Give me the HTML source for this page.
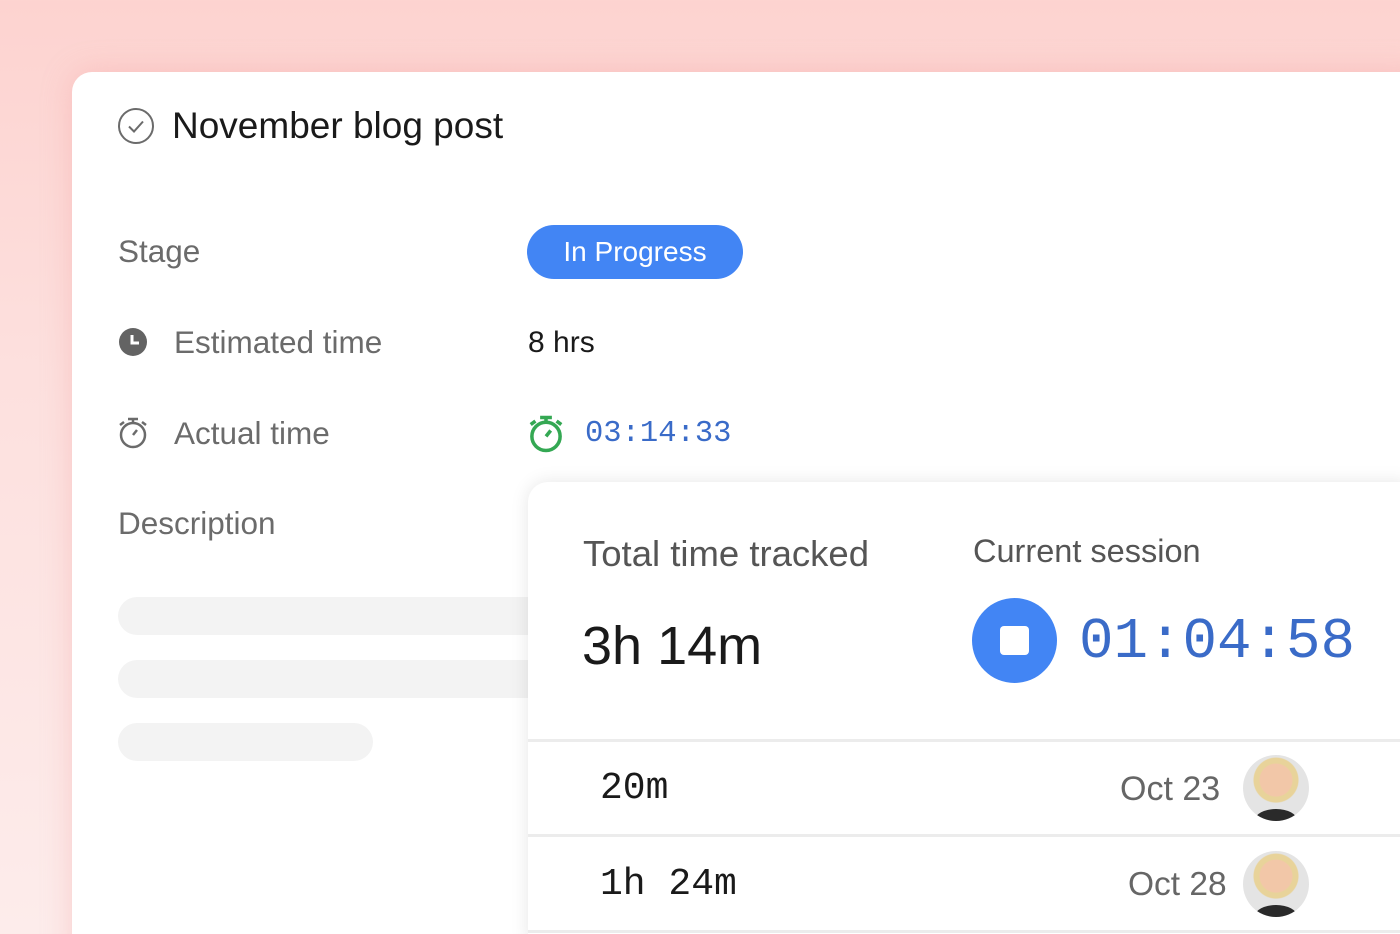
<!DOCTYPE html>
<html><head><style>
*{margin:0;padding:0;box-sizing:border-box}
html,body{width:1400px;height:934px;overflow:hidden}
body{position:relative;font-family:"Liberation Sans",sans-serif;background:linear-gradient(180deg,#fdd3d0 0%,#fde0de 40%,#fdeceb 100%)}
.card{position:absolute;left:72px;top:72px;width:1360px;height:900px;background:#fff;border-radius:20px;box-shadow:0 0 30px rgba(240,150,150,.35)}
.t{position:absolute;white-space:nowrap}
.lab{color:#6b6b6b;font-size:31.5px}
.mono{font-family:"Liberation Mono",monospace}
.bar{position:absolute;left:118px;height:38px;background:#f3f3f3;border-radius:19px}
.pop{position:absolute;left:528px;top:482px;width:880px;height:460px;background:#fff;border-radius:20px 0 0 0;box-shadow:0 0 18px rgba(0,0,0,.1)}
.div{position:absolute;left:528px;width:872px;height:3px;background:#ececec}
.av{position:absolute;width:66px;height:66px;border-radius:50%;background:radial-gradient(circle at 50% 38%,#f2c7a8 0 16px,#e8d39a 17px 22px,#e4e4e4 23px);overflow:hidden}
.av:after{content:"";position:absolute;left:12px;bottom:-10px;width:42px;height:22px;border-radius:50%;background:#2a2a2a}
</style></head><body>
<div class="card"></div>
<svg class="t" style="left:117px;top:107px" width="38" height="38" viewBox="0 0 38 38"><circle cx="19" cy="19" r="17" fill="none" stroke="#6b6b6b" stroke-width="2"/><path d="M12 19.5l5 5 9-10" fill="none" stroke="#6b6b6b" stroke-width="2"/></svg>
<div class="t" style="left:172px;top:105px;font-size:37px;color:#1a1a1a">November blog post</div>
<div class="t lab" style="left:118px;top:233px">Stage</div>
<div class="t" style="left:527px;top:225px;width:216px;height:54px;border-radius:27px;background:#4285f4;color:#fff;font-size:28px;line-height:54px;text-align:center">In Progress</div>
<svg class="t" style="left:118px;top:327px" width="30" height="30" viewBox="0 0 30 30"><circle cx="15" cy="15" r="14" fill="#636363"/><path d="M14 8v8h7" fill="none" stroke="#fff" stroke-width="3"/></svg>
<div class="t lab" style="left:174px;top:324px">Estimated time</div>
<div class="t" style="left:528px;top:326px;font-size:30px;color:#1a1a1a">8 hrs</div>
<svg class="t" style="left:117px;top:416px" width="32" height="34" viewBox="0 0 32 34"><circle cx="16" cy="19" r="12" fill="none" stroke="#6b6b6b" stroke-width="2.5"/><path d="M11 3h10M16 3v4M16 19l4-5M3 9l4-3M29 9l-4-3" stroke="#6b6b6b" stroke-width="2.5" fill="none"/></svg>
<div class="t lab" style="left:174px;top:415px">Actual time</div>
<svg class="t" style="left:527px;top:414px" width="38" height="40" viewBox="0 0 32 34"><circle cx="16" cy="19" r="12" fill="none" stroke="#34a853" stroke-width="3"/><path d="M11 3h10M16 3v4M16 19l4-5M3 9l4-3M29 9l-4-3" stroke="#34a853" stroke-width="3" fill="none"/></svg>
<div class="t mono" style="left:585px;top:417px;font-size:30.5px;color:#3a6bc8">03:14:33</div>
<div class="t lab" style="left:118px;top:505px">Description</div>
<div class="bar" style="top:597px;width:440px"></div>
<div class="bar" style="top:660px;width:440px"></div>
<div class="bar" style="top:723px;width:255px"></div>
<div class="pop"></div>
<div class="t" style="left:583px;top:533px;font-size:36.5px;color:#555">Total time tracked</div>
<div class="t" style="left:973px;top:533px;font-size:32.5px;color:#555">Current session</div>
<div class="t" style="left:582px;top:615px;font-size:54px;color:#1a1a1a">3h 14m</div>
<div class="t" style="left:972px;top:598px;width:85px;height:85px;border-radius:50%;background:#4285f4"><div style="position:absolute;left:28px;top:28px;width:29px;height:29px;background:#fff;border-radius:4px"></div></div>
<div class="t mono" style="left:1079px;top:610px;font-size:57.5px;color:#3a6bc8">01:04:58</div>
<div class="div" style="top:739px"></div>
<div class="t mono" style="left:600px;top:767px;font-size:38px;color:#1a1a1a">20m</div>
<div class="t" style="left:1120px;top:770px;font-size:34px;color:#666">Oct 23</div>
<div class="av" style="left:1243px;top:755px"></div>
<div class="div" style="top:834px"></div>
<div class="t mono" style="left:600px;top:863px;font-size:38px;color:#1a1a1a">1h 24m</div>
<div class="t" style="left:1128px;top:866px;font-size:33.5px;color:#666">Oct 28</div>
<div class="av" style="left:1243px;top:851px"></div>
<div class="div" style="top:930px"></div>
</body></html>
